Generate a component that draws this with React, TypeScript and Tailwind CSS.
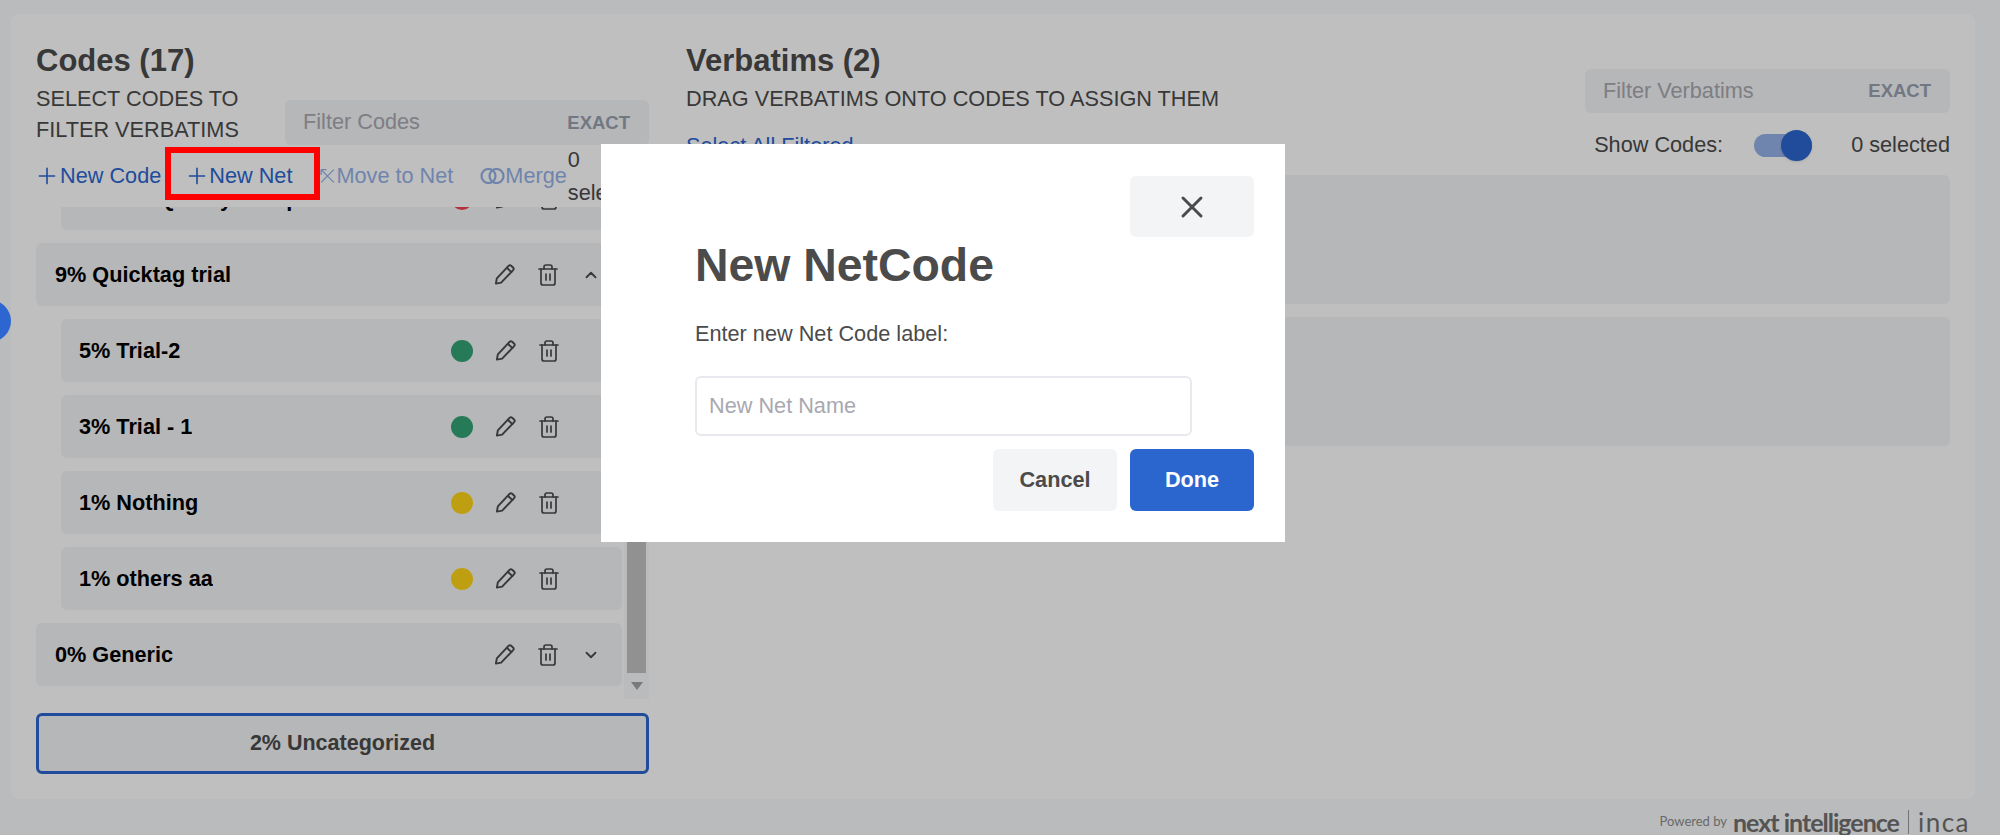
import React from 'react';
import { ChevronDown, ChevronUp, Plus, Trash2, X } from 'lucide-react';

const PencilIcon = () => (
  <svg viewBox="0 0 24 24" className="w-[23px] h-[23px] shrink-0" fill="none" stroke="currentColor" strokeWidth="2" strokeLinejoin="round" strokeLinecap="round">
    <path d="M3 21.5l1-5.5L16.2 3a2 2 0 0 1 2.8-.1l1.9 1.8a2 2 0 0 1 .1 2.8L8.5 20.5z" />
    <path d="M14.5 5l4.7 4.5" />
  </svg>
);

const MoveIcon = () => (
  <svg viewBox="0 0 16 16" className="w-[17px] h-[18px] -ml-[2px] shrink-0" fill="none" stroke="currentColor" strokeWidth="1.2">
    <path d="M2 2l12 12M14 2L2 14M2 2v5M2 2h5" />
  </svg>
);

const MergeIcon = () => (
  <svg viewBox="0 0 25 16" className="w-[25px] h-[16px] shrink-0" fill="none" stroke="currentColor" strokeWidth="2.2">
    <circle cx="8.5" cy="8" r="7" />
    <circle cx="16.5" cy="8" r="7" />
  </svg>
);

type RowProps = {
  label: string;
  dot?: string;
  child?: boolean;
  open?: boolean;
  className?: string;
};

function CodeRow({ label, dot, child, open, className = '' }: RowProps) {
  return (
    <div className={`flex items-center h-[63px] shrink-0 rounded-md bg-gray-100 ${child ? 'ml-[25px] pl-[18px] pr-[61px]' : 'pl-[19px] pr-[22px]'} ${className}`}>
      <span className="pt-px font-bold text-black truncate">{label}</span>
      <div className="ml-auto flex items-center text-[#4b4b4b]">
        {dot && <span className={`w-[22px] h-[22px] rounded-full mr-[21px] ${dot}`} />}
        <PencilIcon />
        <Trash2 className="w-[24px] h-[24px] ml-[20px]" strokeWidth={1.7} />
        {!child && (open
          ? <ChevronUp className="w-[18px] h-[18px] ml-[22px]" strokeWidth={2.4} />
          : <ChevronDown className="w-[18px] h-[18px] ml-[22px]" strokeWidth={2.4} />)}
      </div>
    </div>
  );
}

function FilterBox({ placeholder, className = '' }: { placeholder: string; className?: string }) {
  return (
    <div className={`flex items-center rounded-md bg-gray-100 pl-[18px] pr-[19px] ${className}`}>
      <input placeholder={placeholder} className="flex-1 min-w-0 bg-transparent outline-none placeholder:text-[#a8a8b0]" />
      <span className="text-[18.5px] font-bold text-gray-400">EXACT</span>
    </div>
  );
}

export default function App() {
  return (
    <div className="relative h-[835px] overflow-hidden bg-gray-50 pt-[14px] pl-[11px] pr-[25px] text-[21.7px] text-[#4b4b4b] font-['Liberation_Sans',Arial,sans-serif]">
      <div className="flex h-[785px] rounded-lg bg-white pt-[29px] pl-[25px] pr-[25px] gap-[37px]">
        {/* Codes column */}
        <div className="flex flex-col w-[613px] shrink-0">
          <div className="flex items-end justify-between">
            <div>
              <h2 className="text-[31px] leading-[36px] font-bold">Codes (17)</h2>
              <p className="mt-[4px] w-[232px] leading-[31px]">SELECT CODES TO FILTER VERBATIMS</p>
            </div>
            <FilterBox placeholder="Filter Codes" className="w-[364px] h-[45px]" />
          </div>

          <div className="flex items-center h-[62px] pl-[3px] text-[#2b66cf]">
            <button className="flex items-center">
              <Plus className="w-[26px] h-[26px] -mx-[5px]" strokeWidth={1.5} />
              <span className="ml-[5px]">New Code</span>
            </button>
            <button className="flex items-center ml-[28px]">
              <Plus className="w-[26px] h-[26px] -mx-[5px]" strokeWidth={1.5} />
              <span className="ml-[4px]">New Net</span>
            </button>
            <button className="flex items-center ml-[29px] opacity-50">
              <MoveIcon />
              <span>Move to Net</span>
            </button>
            <button className="flex items-center ml-[27px] opacity-50">
              <MergeIcon />
              <span>Merge</span>
            </button>
            <span className="ml-px w-[60px] leading-[33px] text-[#4b4b4b]">0 selected</span>
          </div>

          <div className="flex h-[492px] gap-[2px] overflow-hidden">
            <div className="flex flex-1 min-w-0 flex-col gap-[13px] overflow-hidden">
              <CodeRow label="3% Not Quality Comp" dot="bg-[#f0404f]" child className="-mt-[40px]" />
              <CodeRow label="9% Quicktag trial" open />
              <CodeRow label="5% Trial-2" dot="bg-[#33a375]" child />
              <CodeRow label="3% Trial - 1" dot="bg-[#33a375]" child />
              <CodeRow label="1% Nothing" dot="bg-[#ffd518]" child />
              <CodeRow label="1% others aa" dot="bg-[#ffd518]" child />
              <CodeRow label="0% Generic" />
            </div>
            <div className="flex flex-col w-[25px] shrink-0 bg-gray-50 px-[3px]">
              <div className="flex-1 mt-[60px] bg-[#c2c2c2]" />
              <div className="flex items-center justify-center h-[26px]">
                <span className="w-0 h-0 border-x-[6px] border-x-transparent border-t-[8px] border-t-[#a3a3a3]" />
              </div>
            </div>
          </div>

          <button className="mt-[14px] h-[61px] rounded-md border-[3px] border-[#2b66cf] bg-gray-100 font-bold text-[21.5px]">
            2% Uncategorized
          </button>
        </div>

        {/* Verbatims column */}
        <div className="flex flex-col flex-1 min-w-0">
          <div className="flex justify-between">
            <div>
              <h2 className="text-[31px] leading-[36px] font-bold">Verbatims (2)</h2>
              <p className="mt-[4px] leading-[31px]">DRAG VERBATIMS ONTO CODES TO ASSIGN THEM</p>
              <a className="block mt-[16px] leading-[31px] text-[#2b66cf]">Select All Filtered</a>
            </div>
            <div className="flex flex-col w-[365px] pt-[26px]">
              <FilterBox placeholder="Filter Verbatims" className="h-[44px]" />
              <div className="flex items-center justify-end h-[31px] mt-[17px]">
                <span>Show Codes:</span>
                <div className="relative w-[58px] h-[23px] ml-[31px] rounded-full bg-[#2b66cf]/50">
                  <span className="absolute -top-[4px] right-0 w-[31px] h-[31px] rounded-full bg-[#2b66cf] shadow" />
                </div>
                <span className="ml-[39px]">0 selected</span>
              </div>
            </div>
          </div>
          <div className="flex flex-col gap-[13px] mt-[14px]">
            <div className="h-[129px] rounded-md bg-gray-100" />
            <div className="h-[129px] rounded-md bg-gray-100" />
          </div>
        </div>
      </div>

      <div className="flex items-center justify-end h-[36px] pt-[10px] pr-[5px] text-[#707070]">
        <span className="text-[13px] mr-[6px] text-[#8c8c8c] font-['Lato',sans-serif]">Powered by</span>
        <span className="text-[25px] leading-none font-bold tracking-[-1px] font-['Lato',sans-serif]">next intelligence</span>
        <span className="h-[24px] w-px bg-[#999] mx-[9px]" />
        <span className="text-[26px] leading-none tracking-[1.5px] font-['Lato',sans-serif]">inca</span>
      </div>

      {/* Modal backdrop and dialog */}
      <div className="absolute inset-0 bg-black/25">
        <div className="absolute left-[601px] top-[144px] flex w-[684px] flex-col bg-white pt-[32px] pr-[31px] pb-[31px] pl-[94px]">
          <button className="self-end flex items-center justify-center w-[124px] h-[61px] rounded-md bg-gray-100">
            <X className="w-[36px] h-[36px]" strokeWidth={2} />
          </button>
          <h2 className="mt-[2px] text-[46.4px] leading-[52px] font-bold">New NetCode</h2>
          <p className="mt-[28px] leading-[30px]">Enter new Net Code label:</p>
          <input
            placeholder="New Net Name"
            className="mt-[27px] w-[497px] h-[60px] rounded-md border-2 border-[#e8e9ee] px-[12px] outline-none placeholder:text-[#a8a8b0]"
          />
          <div className="flex justify-end gap-[13px] mt-[13px]">
            <button className="w-[124px] h-[62px] rounded-md bg-gray-100 font-bold">Cancel</button>
            <button className="w-[124px] h-[62px] rounded-md bg-[#2b66cf] font-bold text-white">Done</button>
          </div>
        </div>
      </div>

      {/* Items drawn on top of the backdrop */}
      <span className="absolute -left-[31px] top-[300px] w-[42px] h-[42px] rounded-full bg-[#2d66d0]" />
      <span className="absolute left-[165px] top-[147px] w-[155px] h-[53px] border-[6px] border-[#ff0000]" />
    </div>
  );
}
